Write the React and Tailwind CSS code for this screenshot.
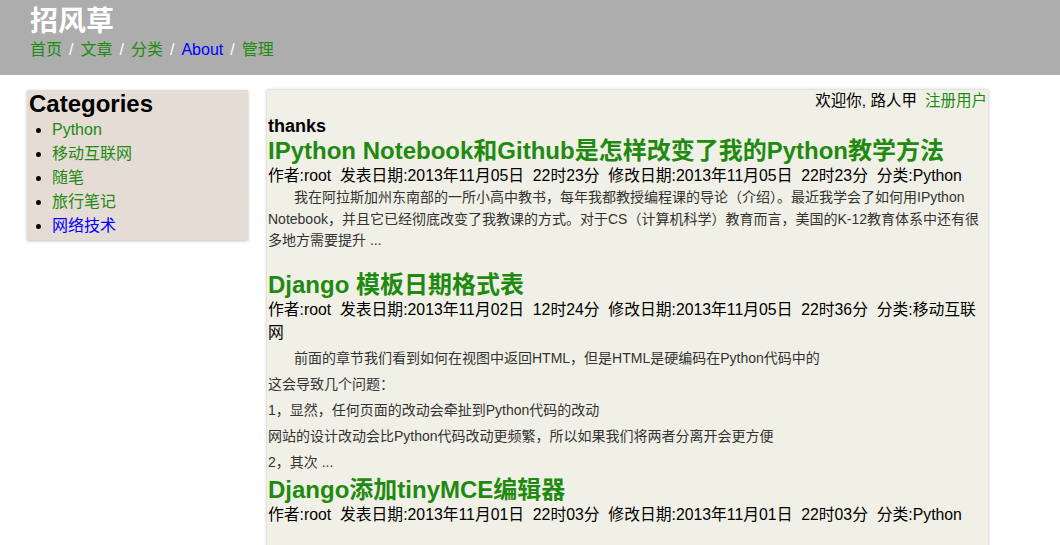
import React from 'react'

const FONT = { fontFamily: '"Liberation Sans", Arial, "Noto Sans CJK SC", sans-serif' }

const NAV = [
  { label: '首页', color: 'text-[#1f8a10]' },
  { label: '文章', color: 'text-[#1f8a10]' },
  { label: '分类', color: 'text-[#1f8a10]' },
  { label: 'About', color: 'text-[#0000ff]' },
  { label: '管理', color: 'text-[#1f8a10]' },
]

const CATEGORIES = [
  { label: 'Python', color: 'text-[#1f8a10]' },
  { label: '移动互联网', color: 'text-[#1f8a10]' },
  { label: '随笔', color: 'text-[#1f8a10]' },
  { label: '旅行笔记', color: 'text-[#1f8a10]' },
  { label: '网络技术', color: 'text-[#0000ff]' },
]

function Meta({ children }) {
  return <div className="text-[15.8px] leading-[23px] text-black">{children}</div>
}

export default function App() {
  return (
    <div className="min-h-[545px] bg-white overflow-hidden" style={FONT}>
      {/* header */}
      <header className="h-[75px] bg-[#adadad] pl-[30px] pt-[5px]">
        <h1 className="text-[28px] leading-[34px] font-bold text-white">招风草</h1>
        <nav className="text-[16px] leading-[22px] flex gap-[7px]">
          {NAV.map((n, i) => (
            <React.Fragment key={n.label}>
              {i > 0 && <span className="text-white">/</span>}
              <a className={n.color}>{n.label}</a>
            </React.Fragment>
          ))}
        </nav>
      </header>

      <div className="flex items-start pt-[15px]">
        {/* sidebar */}
        <aside className="ml-[27px] w-[221px] bg-[#e5dcd6] pl-[2px] pb-[2px] shadow-[0_1px_3px_rgba(0,0,0,0.25)]">
          <h2 className="text-[24px] leading-[28px] font-bold text-black">Categories</h2>
          <ul className="list-disc pl-[23px] text-[16px] leading-[24px]">
            {CATEGORIES.map(c => (
              <li key={c.label} className={c.color + ' marker:text-black'}>{c.label}</li>
            ))}
          </ul>
        </aside>

        {/* main */}
        <main className="ml-[19px] w-[721px] h-[460px] bg-[#f1f0e6] pl-[1px] shadow-[0_0_3px_rgba(0,0,0,0.3)]">
          <div className="text-right text-[15.5px] leading-[22px] pr-[1px]">
            <span className="text-black">欢迎你, 路人甲</span>
            <a className="ml-[8px] text-[#1f8a10]">注册用户</a>
          </div>
          <div className="mt-[3px] text-[18px] leading-[22px] font-bold text-black">thanks</div>

          <h3 className="text-[24px] leading-[27px] font-bold text-[#1f8a10]">IPython Notebook和Github是怎样改变了我的Python教学方法</h3>
          <Meta>作者:root&nbsp; 发表日期:2013年11月05日&nbsp; 22时23分&nbsp; 修改日期:2013年11月05日&nbsp; 22时23分&nbsp; 分类:Python</Meta>
          <p className="text-[14px] leading-[21.5px] text-[#333] indent-[26px] pr-[6px]">
            我在阿拉斯加州东南部的一所小高中教书，每年我都教授编程课的导论（介绍）。最近我学会了如何用IPython Notebook，并且它已经彻底改变了我教课的方式。对于CS（计算机科学）教育而言，美国的K-12教育体系中还有很多地方需要提升 ...
          </p>

          <h3 className="mt-[19px] text-[24px] leading-[27px] font-bold text-[#1f8a10]">Django 模板日期格式表</h3>
          <Meta>作者:root&nbsp; 发表日期:2013年11月02日&nbsp; 12时24分&nbsp; 修改日期:2013年11月05日&nbsp; 22时36分&nbsp; 分类:移动互联网</Meta>
          <div className="mt-[1px] text-[14px] leading-[26px] text-[#333]">
            <p className="indent-[26px]">前面的章节我们看到如何在视图中返回HTML，但是HTML是硬编码在Python代码中的</p>
            <p>这会导致几个问题：</p>
            <p>1，显然，任何页面的改动会牵扯到Python代码的改动</p>
            <p>网站的设计改动会比Python代码改动更频繁，所以如果我们将两者分离开会更方便</p>
            <p>2，其次 ...</p>
          </div>

          <h3 className="mt-[1px] text-[24px] leading-[27px] font-bold text-[#1f8a10]">Django添加tinyMCE编辑器</h3>
          <Meta>作者:root&nbsp; 发表日期:2013年11月01日&nbsp; 22时03分&nbsp; 修改日期:2013年11月01日&nbsp; 22时03分&nbsp; 分类:Python</Meta>
        </main>
      </div>
    </div>
  )
}
